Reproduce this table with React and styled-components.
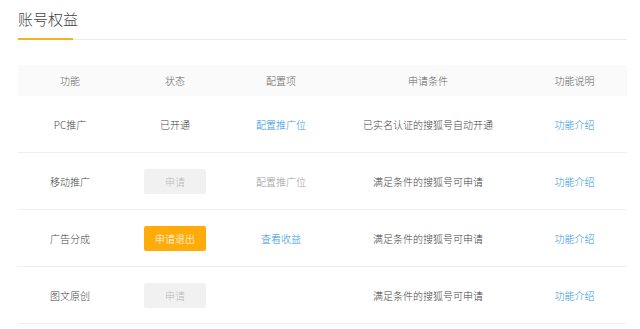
import React from "react";
import styled, { createGlobalStyle } from "styled-components";

const Global = createGlobalStyle`
  html, body { margin: 0; padding: 0; background: #fff; }
  body {
    font-family: "Noto Sans CJK SC", "Noto Sans", sans-serif;
    color: #333;
  }
`;

const Page = styled.div`
  padding: 0 13px 0 18px;
  width: 640px;
  box-sizing: border-box;
`;

const Tabs = styled.div`
  display: flex;
  border-bottom: 1px solid #ececec;
`;

const Tab = styled.div`
  width: 55px;
  padding: 8px 0 8px;
  margin-bottom: -1px;
  font-size: 15px;
  font-weight: 300;
  line-height: 22px;
  color: #444;
  white-space: nowrap;
  border-bottom: 2px solid #f5b324;
`;

const Table = styled.div`
  margin-top: 25px;
  font-size: 10px;
  font-weight: 300;
`;

const cols = "104px 106px 106px 188px 105px";

const HeadRow = styled.div`
  display: grid;
  grid-template-columns: ${cols};
  height: 31px;
  align-items: center;
  background: #fafafa;
  color: #666;
`;

const Row = styled.div`
  display: grid;
  grid-template-columns: ${cols};
  height: 56px;
  align-items: center;
  border-bottom: 1px solid #efefef;
  color: #444;
`;

const Cell = styled.div`
  display: flex;
  justify-content: center;
  align-items: center;
  white-space: nowrap;
  color: ${(p) => p.$tone === "muted" ? "#999" : p.$tone === "link" ? "#2e93dd" : "inherit"};
`;

const Btn = styled.div`
  width: 62px;
  height: 25px;
  border-radius: 2px;
  display: flex;
  align-items: center;
  justify-content: center;
  font-size: 10px;
  background: ${(p) => (p.$primary ? "#ffab0a" : "#f1f1f1")};
  color: ${(p) => (p.$primary ? "#fff" : "#bbb")};
`;

const rows = [
  { name: "PC推广", status: { text: "已开通" }, config: { text: "配置推广位", tone: "link" }, cond: "已实名认证的搜狐号自动开通" },
  { name: "移动推广", status: { btn: "申请" }, config: { text: "配置推广位", tone: "muted" }, cond: "满足条件的搜狐号可申请" },
  { name: "广告分成", status: { btn: "申请退出", primary: true }, config: { text: "查看收益", tone: "link" }, cond: "满足条件的搜狐号可申请" },
  { name: "图文原创", status: { btn: "申请" }, config: null, cond: "满足条件的搜狐号可申请" },
];

export default function App() {
  return (
    <Page>
      <Global />
      <Tabs>
        <Tab>账号权益</Tab>
      </Tabs>
      <Table>
        <HeadRow>
          <Cell>功能</Cell>
          <Cell>状态</Cell>
          <Cell>配置项</Cell>
          <Cell>申请条件</Cell>
          <Cell>功能说明</Cell>
        </HeadRow>
        {rows.map((r) => (
          <Row key={r.name}>
            <Cell>{r.name}</Cell>
            <Cell>
              {r.status.btn ? <Btn $primary={r.status.primary}>{r.status.btn}</Btn> : r.status.text}
            </Cell>
            <Cell $tone={r.config?.tone}>{r.config?.text}</Cell>
            <Cell>{r.cond}</Cell>
            <Cell $tone="link">功能介绍</Cell>
          </Row>
        ))}
      </Table>
    </Page>
  );
}
